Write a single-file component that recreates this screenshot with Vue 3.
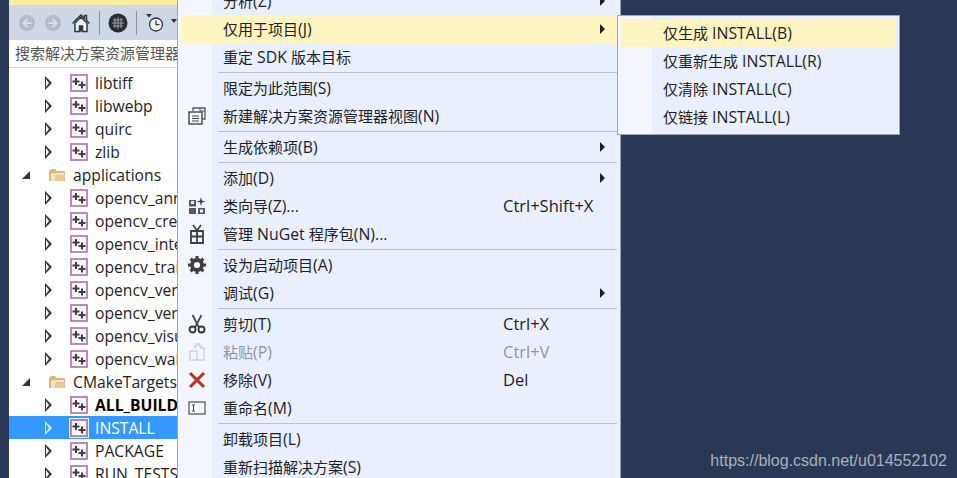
<template>
  <div class="screen">
    <div class="edge"></div>
    <div class="explorer">
      <div class="title-strip"></div>
      <div class="toolbar">
        <svg class="tool-icon" width="18" height="18" viewBox="0 0 18 18"><circle cx="9" cy="9" r="8" fill="#b4bac6" /><path d="M13.500 9H6M9.500 5 5.500 9l4 4" fill="none" stroke="#d6dbe6" stroke-width="2.200" /></svg>
        <svg class="tool-icon" width="18" height="18" viewBox="0 0 18 18"><circle cx="9" cy="9" r="8" fill="#b4bac6" /><path d="M4.500 9H12M8.500 5l4 4-4 4" fill="none" stroke="#d6dbe6" stroke-width="2.200" /></svg>
        <svg class="home" width="20" height="20" viewBox="0 0 20 20"><path d="M1.500 10.500 10 2l3.500 3.500V2.500h2v5l3 3" fill="#eef0f4" stroke="#33373d" stroke-width="1.500" /><path d="M4 10v8.500h4.500V13h3v5.500H16V10L10 4z" fill="#eef0f4" stroke="#33373d" stroke-width="1.500" /><rect x="8.500" y="13" width="3" height="5.500" fill="#33373d" /></svg>
        <span class="divider"></span>
        <svg class="globe" width="20" height="20" viewBox="0 0 20 20"><circle cx="10" cy="10" r="9.500" fill="#2b2c30" /><path d="M7 5v10M10 4v12M13 5v10M5 7h10M4 10h12M5 13h10" stroke="#9a9ea6" stroke-width="1" /></svg>
        <span class="divider"></span>
        <svg class="history" width="20" height="20" viewBox="0 0 20 20"><path d="M1 1h6L4 4.500z" fill="#33373d" /><circle cx="11" cy="11.500" r="6.500" fill="#eef0f4" stroke="#33373d" stroke-width="1.300" /><path d="M11 7.500v4.200h3.500" fill="none" stroke="#33373d" stroke-width="1.200" /></svg>
        <span class="drop"></span>
      </div>
      <div class="search">搜索解决方案资源管理器(Ctrl+;)</div>
      <div class="tree">
        <div
          v-for="row in treeRows"
          :key="row.name"
          class="tree-row"
          :class="{ group: row.group, selected: row.selected, bold: row.bold }"
        >
          <span class="twist" :class="{ open: row.group }"></span>
          <svg v-if="row.group" class="folder" width="18" height="14" viewBox="0 0 18 14">
            <path d="M1 13V3l2-2h4l2 2h7l1 1v9z" fill="#dcb67a" />
            <path d="M3 13V6l1.500-1H16v8z" fill="#f3e2c4" />
            <path d="M6 13 8 7h9.500L16 13z" fill="#e8c998" />
          </svg>
          <svg v-else class="project" :class="{ ring: row.selected }" width="18" height="18" viewBox="0 0 18 18">
            <rect x="1" y="1" width="16" height="16" fill="#fbf8fb" stroke="#b57fb4" stroke-width="1.800" />
            <path d="M6 4v7M2.500 7.500h7M12 7.500v7M8.500 11h7" stroke="#404040" stroke-width="2" />
          </svg>
          <span class="tree-name">{{ row.name }}</span>
        </div>
      </div>
    </div>
    <div class="desk"></div>

    <div class="menu">
      <template v-for="(item, i) in menuItems" :key="i">
        <div v-if="item.sep" class="menu-sep"></div>
        <div v-else class="menu-item" :class="{ hot: item.hot, off: item.off }">
          <span class="menu-icon">
            <svg v-if="item.icon === 'view'" width="20" height="20" viewBox="0 0 20 20"><path d="M6 5V2h12v11h-3" fill="none" stroke="#555" stroke-width="1.300" /><path d="M13 2v3h5" fill="none" stroke="#555" /><rect x="2" y="6" width="13" height="12" fill="#f5f7fb" stroke="#444" stroke-width="1.400" /><path d="M5 10h7M5 12.500h7M5 15h7" stroke="#444" /></svg>
            <svg v-else-if="item.icon === 'wizard'" width="18" height="18" viewBox="0 0 18 18"><rect x="1" y="3" width="7" height="6.500" fill="#5a5a5a" /><rect x="3" y="4" width="3" height="3" fill="#e9effd" /><rect x="1" y="11" width="7" height="6" fill="#5a5a5a" /><rect x="10" y="11" width="7" height="6" fill="#5a5a5a" /><rect x="12" y="12.500" width="3" height="3" fill="#e9effd" /><path d="M13 0l1 3.500 3.500 1-3.500 1-1 3.500-1-3.500-3.500-1 3.500-1z" fill="#444" /></svg>
            <svg v-else-if="item.icon === 'gift'" width="18" height="20" viewBox="0 0 18 20"><path d="M3 7h12v12H3zM9 7v12M3 12.500h12" fill="#f0f3fb" stroke="#3f3f3f" stroke-width="1.800" /><path d="M5 1l4 5.500L13 1" fill="none" stroke="#3f3f3f" stroke-width="1.800" /></svg>
            <svg v-else-if="item.icon === 'gear'" width="20" height="20" viewBox="0 0 20 20"><circle cx="10" cy="10" r="5" fill="none" stroke="#3f3f3f" stroke-width="3.800" /><path d="M10 1v4M10 15v4M1 10h4M15 10h4M3.600 3.600l3 3M13.400 13.400l3 3M3.600 16.400l3-3M13.400 6.600l3-3" stroke="#3f3f3f" stroke-width="3" /></svg>
            <svg v-else-if="item.icon === 'cut'" width="18" height="20" viewBox="0 0 18 20"><path d="M4.500 1l6.500 12.500M13.500 1 7 13.500" fill="none" stroke="#444" stroke-width="1.700" /><circle cx="4.500" cy="15.500" r="3" fill="none" stroke="#333" stroke-width="1.800" /><circle cx="13.500" cy="15.500" r="3" fill="none" stroke="#333" stroke-width="1.800" /></svg>
            <svg v-else-if="item.icon === 'paste'" width="18" height="20" viewBox="0 0 18 20"><path d="M7 6V4h1.500V2h3v2H13v2h3v12H9" fill="none" stroke="#cfd3da" stroke-width="1.500" /><rect x="2" y="9" width="7" height="9" fill="none" stroke="#cfd3da" stroke-width="1.500" /></svg>
            <svg v-else-if="item.icon === 'remove'" width="18" height="18" viewBox="0 0 18 18"><path d="M2 2l14 14M16 2 2 16" stroke="#b6321c" stroke-width="3" /></svg>
            <svg v-else-if="item.icon === 'rename'" width="18" height="14" viewBox="0 0 18 14"><rect x="1" y="1" width="16" height="12" fill="#f5f7fb" stroke="#6d7178" stroke-width="1.500" /><path d="M4 4h3M4 10h3M5.500 4v6" stroke="#555" /></svg>
          </span>
          <span class="menu-label">
            <span v-for="(run, r) in runs(item.label)" :key="r" :class="{ latin: !isCjk(run) }">{{ run }}</span>
          </span>
          <span v-if="item.keys" class="menu-keys">{{ item.keys }}</span>
          <span v-if="item.more" class="menu-more"></span>
        </div>
      </template>
    </div>

    <div class="submenu">
      <div v-for="(label, i) in subItems" :key="label" class="sub-item" :class="{ hot: i === 0 }">
        <span v-for="(run, r) in runs(label)" :key="r" :class="{ latin: !isCjk(run) }">{{ run }}</span>
      </div>
    </div>

    <div class="watermark">https://blog.csdn.net/u014552102</div>
  </div>
</template>

<script setup>
const names = ['opencv_annotation', 'opencv_createsamples', 'opencv_interactive', 'opencv_traincascade', 'opencv_version', 'opencv_version_win32', 'opencv_visualisation', 'opencv_waldboost']

const treeRows = [
  { name: 'libtiff' },
  { name: 'libwebp' },
  { name: 'quirc' },
  { name: 'zlib' },
  { name: 'applications', group: true },
  ...names.map((name) => ({ name })),
  { name: 'CMakeTargets', group: true },
  { name: 'ALL_BUILD', bold: true },
  { name: 'INSTALL', selected: true },
  { name: 'PACKAGE' },
  { name: 'RUN_TESTS' },
]

const menuItems = [
  { label: '分析(Z)', more: true },
  { label: '仅用于项目(J)', more: true, hot: true },
  { label: '重定 SDK 版本目标' },
  { sep: true },
  { label: '限定为此范围(S)' },
  { label: '新建解决方案资源管理器视图(N)', icon: 'view' },
  { sep: true },
  { label: '生成依赖项(B)', more: true },
  { sep: true },
  { label: '添加(D)', more: true },
  { label: '类向导(Z)...', keys: 'Ctrl+Shift+X', icon: 'wizard' },
  { label: '管理 NuGet 程序包(N)...', icon: 'gift' },
  { sep: true },
  { label: '设为启动项目(A)', icon: 'gear' },
  { label: '调试(G)', more: true },
  { sep: true },
  { label: '剪切(T)', keys: 'Ctrl+X', icon: 'cut' },
  { label: '粘贴(P)', keys: 'Ctrl+V', icon: 'paste', off: true },
  { label: '移除(V)', keys: 'Del', icon: 'remove' },
  { label: '重命名(M)', icon: 'rename' },
  { sep: true },
  { label: '卸载项目(L)' },
  { label: '重新扫描解决方案(S)' },
]

const subItems = ['仅生成 INSTALL(B)', '仅重新生成 INSTALL(R)', '仅清除 INSTALL(C)', '仅链接 INSTALL(L)']

const isCjk = (text) => /[\u4e00-\u9fff]/.test(text)
// Segoe's latin letters run bigger than the CJK next to them
const runs = (text) => text.split(/([\u4e00-\u9fff]+)/).filter(Boolean)
</script>

<style>
html,
body {
  margin: 0;
  overflow: hidden;
}
</style>

<style scoped>
.screen {
  position: relative;
  display: flex;
  width: 957px;
  height: 478px;
  overflow: hidden;
  background: #293955;
  font-family: "Open Sans", "Noto Sans CJK SC", sans-serif;
  font-size: 15px;
  color: #1e1e1e;
}

.edge {
  width: 9px;
}

.explorer {
  width: 169px;
  background: #fff;
  overflow: hidden;
}

.desk {
  flex: 1;
}

.title-strip {
  height: 5px;
  background: #ffec9e;
}

.toolbar {
  display: flex;
  align-items: center;
  height: 35px;
  padding-left: 9px;
  background: #cfd6e5;
}

.tool-icon {
  margin-right: 8px;
}

.home {
  margin-left: 1px;
}

.divider {
  width: 1px;
  height: 24px;
  margin: 0 8px;
  background: #8b93a3;
}

.drop {
  width: 0;
  height: 0;
  margin-left: 6px;
  border: 3px solid transparent;
  border-top: 4px solid #333;
}

.search {
  height: 28px;
  padding-left: 6px;
  line-height: 26px;
  color: #555;
  white-space: nowrap;
  overflow: hidden;
  box-sizing: border-box;
  background: #fff;
  border-bottom: 1px solid #cfd6e5;
}

.tree {
  padding-top: 3px;
}

.tree-row {
  display: flex;
  align-items: center;
  height: 23px;
  padding-left: 36px;
  font-size: 15.7px;
  white-space: nowrap;
}

.tree-row.group {
  padding-left: 13px;
}

.tree-row.selected {
  background: #3399ff;
  color: #fff;
}

.tree-row.bold {
  font-weight: 700;
  color: #000;
}

.twist {
  width: 0;
  height: 0;
  margin-right: 18px;
  border-left: 7px solid #333;
  border-top: 7px solid transparent;
  border-bottom: 7px solid transparent;
  position: relative;
}

.twist::after {
  content: "";
  position: absolute;
  left: -6px;
  top: -4px;
  width: 0;
  height: 0;
  border-left: 3px solid #fff;
  border-top: 4px solid transparent;
  border-bottom: 4px solid transparent;
}

.selected .twist {
  border-left-color: #d8ebff;
}

.selected .twist::after {
  border-left-color: #3399ff;
}

.twist.open {
  margin-right: 18px;
  border: 0;
  border-bottom: 8px solid #333;
  border-left: 8px solid transparent;
}

.twist.open::after {
  display: none;
}

.project {
  margin-right: 7px;
  flex: none;
}

.project.ring {
  outline: 1px solid #e6f2ff;
}

.folder {
  margin-right: 7px;
  flex: none;
}

.menu {
  position: absolute;
  left: 177px;
  top: -13px;
  width: 444px;
  box-sizing: border-box;
  padding: 0 3px 0 4px;
  border-left: 1px solid #9ba7b7;
  border-right: 1px solid #9ba7b7;
  background: linear-gradient(90deg, #f3f6fe 34px, #e9effd 34px);
}

.menu-item {
  display: flex;
  align-items: center;
  position: relative;
  height: 28px;
  white-space: nowrap;
}

.menu-item.hot {
  background: #fdf4bf;
}

.menu-item.off {
  color: #8f96a3;
}

.menu-icon {
  display: flex;
  align-items: center;
  justify-content: center;
  width: 30px;
  margin-right: 11px;
  flex: none;
}

.menu-label {
  width: 280px;
  margin-top: -1px;
}

.latin {
  font-size: 15.8px;
}

.menu-keys {
  position: absolute;
  left: 321px;
  top: 2px;
  font-size: 16.5px;
}

.menu-more {
  position: absolute;
  right: 12px;
  top: 9px;
  width: 0;
  height: 0;
  border-left: 5px solid #1e1e1e;
  border-top: 5px solid transparent;
  border-bottom: 5px solid transparent;
}

.menu-sep {
  height: 1px;
  margin: 1px 0 1px 36px;
  background: #bec3cb;
}

.submenu {
  position: absolute;
  left: 617px;
  top: 15px;
  width: 283px;
  box-sizing: border-box;
  padding: 3px;
  border: 1px solid #9ba7b7;
  background: linear-gradient(90deg, #f3f6fe 34px, #e9effd 34px);
}

.sub-item {
  height: 28px;
  padding-left: 42px;
  line-height: 28px;
  white-space: nowrap;
}

.sub-item.hot {
  background: #fdf4bf;
}

.watermark {
  position: absolute;
  right: 10px;
  bottom: 8px;
  color: #a9b0bc;
  font-family: "Liberation Sans", sans-serif;
  font-size: 16px;
}
</style>
